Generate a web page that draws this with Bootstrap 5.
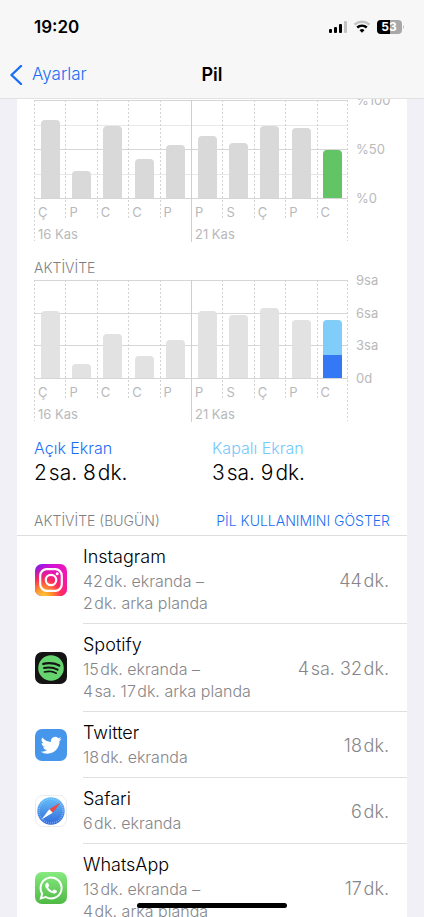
<!DOCTYPE html>
<html lang="tr">
<head>
<meta charset="utf-8">
<meta name="viewport" content="width=device-width, initial-scale=1">
<title>Pil</title>
<link href="https://cdn.jsdelivr.net/npm/bootstrap@5.3.0/dist/css/bootstrap.min.css" rel="stylesheet">
<style>
  body { font-family: Inter, "Liberation Sans", sans-serif; font-weight: 300; background: #f1f0f6; color: #000; }
  a, button { font-weight: 300; }
  .top-area { background: #f7f7f7; border-bottom: 1px solid #e2e2e3; }
  .status-line { height: 52px; padding: 3px 20px 0 34px; }
  .clock { font-size: 17px; font-weight: 600; }
  .title-line { display: grid; grid-template-columns: 1fr auto 1fr; height: 46px; padding: 0 10px; font-size: 17px; }
  .title-line h1 { font-size: 18px; font-weight: 600; }
  .ios-blue { color: #1a6df5; }
  .scroller { min-height: 0; scrollbar-width: none; }
  .scroller::-webkit-scrollbar { display: none; }
  .panel { margin: 0 17px; background: #fff; padding-top: 1px; }
  .inset { padding-left: 17px; padding-right: 17px; }
  .chart { padding: 0 59px 0 17px; display: grid; grid-template-columns: 1fr 0; color: #b9b9bb; font-size: 13px; font-weight: 400; }
  .plot { display: grid; }
  .plot > * { grid-area: 1 / 1; }
  .rules, .scale { height: 99px; }
  .rules i { height: 1px; background: #d6d6d6; }
  .rules i.faint { background: #e8e8e8; }
  .scale span { height: 1px; line-height: 1px; white-space: nowrap; padding-left: 8px; }
  .days { display: grid; grid-template-columns: repeat(10, minmax(0, 1fr)); height: 142px; }
  .day, .days-end { background: repeating-linear-gradient(to bottom, #d2d2d4 0 2px, transparent 2px 4px) left top / 1px 100% no-repeat; }
  .day { height: 118px; }
  .day.first { height: 141px; }
  .day.week { height: 142px; background: linear-gradient(#cfcfd1, #cfcfd1) left top / 1px 100% no-repeat; }
  .days-end { width: 1px; height: 141px; justify-self: end; }
  .bar-box { height: 98px; padding-left: 1px; }
  .bar { width: 19px; border-radius: 4px 4px 0 0; background: #d9d9d9; overflow: hidden; }
  .pale .bar { background: #e2e2e2; }
  .bar.green { background: #63c466; }
  .pale .bar.split { background: #80cdfa; }
  .split div { background: #3478f6; }
  .day-name { display: block; line-height: 20px; padding: 4px 0 0 4px; }
  .day-date { display: block; line-height: 20px; padding: 2px 0 0 4px; white-space: nowrap; }
  .caption { font-size: 14px; line-height: 20px; color: #7f7f83; }
  .chart-caption { padding-top: 16px; padding-bottom: 2px; }
  .totals { font-size: 16px; line-height: 22px; padding-top: 15px; }
  .totals strong { font-size: 21px; line-height: 28px; font-weight: 300; display: block; }
  .sky { color: #75c8fa; }
  .apps { border-top: 1px solid #dededf; }
  .app-text { padding: 10px 18px 9px 0; border-bottom: 1px solid #dfdfe0; }
  .app-row { padding-left: 18px; gap: 16px; }
  .app-row svg { width: 32px; height: 32px; }
  .app-name { font-size: 18px; line-height: 22px; font-weight: 300; margin-bottom: 2px; }
  .app-note { font-size: 16px; line-height: 22px; color: #86868a; }
  .app-time { font-size: 18px; color: #86868a; white-space: nowrap; }
  .home-bar { width: 150px; height: 5px; bottom: 9px; background: #000; }
</style>
<script src="https://cdn.jsdelivr.net/npm/bootstrap@5.3.0/dist/js/bootstrap.bundle.min.js"></script>
</head>
<body class="vh-100 d-flex flex-column overflow-hidden">

<header class="top-area flex-shrink-0">
  <div class="status-line d-flex align-items-center justify-content-between">
    <span class="clock">19:20</span>
    <svg width="76" height="15" viewBox="0 0 76 15" role="img" aria-label="Sinyal, Wi-Fi, pil yüzde 53">
      <rect x="1" y="9" width="3" height="4" rx="1"/><rect x="6" y="7" width="3" height="6" rx="1"/>
      <rect x="11" y="4" width="3" height="9" rx="1"/><rect x="16" y="1" width="3" height="12" rx="1" fill="#c3c3c3"/>
      <path d="M26.500 4.600a11.500 11.500 0 0 1 15 0" fill="none" stroke="#c3c3c3" stroke-width="2.500"/>
      <path d="M29.200 7.500a7.300 7.300 0 0 1 9.600 0" fill="none" stroke="#000" stroke-width="2.500"/>
      <path d="M34 12.800l-2.500-2.500a3.600 3.600 0 0 1 5 0z"/>
      <rect x="49" y="0" width="25" height="14" rx="4" fill="#a8a8a8"/>
      <path d="M53 0h9v14h-9a4 4 0 0 1-4-4V4a4 4 0 0 1 4-4z"/>
      <path d="M75 5q1.500 2 0 4z" fill="#a8a8a8"/>
      <text x="61" y="11" text-anchor="middle" font-size="12" font-weight="700" fill="#fff">53</text>
    </svg>
  </div>
  <nav class="title-line align-items-center">
    <a href="#" class="ios-blue text-decoration-none d-flex align-items-center gap-2">
      <svg width="14" height="20" viewBox="0 0 14 20" fill="none" stroke="currentColor" stroke-width="2.400" stroke-linecap="round" stroke-linejoin="round" aria-hidden="true"><path d="M11 1L1.500 10l9.500 9"/></svg>
      Ayarlar
    </a>
    <h1 class="m-0">Pil</h1>
  </nav>
</header>

<main class="scroller flex-fill overflow-auto">
  <div class="panel">
    <section class="chart" aria-label="Pil düzeyi">
      <div class="plot">
        <div class="rules d-flex flex-column justify-content-between"><i></i><i class="faint"></i><i></i><i class="faint"></i><i></i></div>
        <div class="days">
          <div class="day first"><div class="bar-box d-flex align-items-end justify-content-center"><div class="bar" style="height:80%"></div></div><span class="day-name">Ç</span><span class="day-date">16 Kas</span></div>
          <div class="day"><div class="bar-box d-flex align-items-end justify-content-center"><div class="bar" style="height:28%"></div></div><span class="day-name">P</span></div>
          <div class="day"><div class="bar-box d-flex align-items-end justify-content-center"><div class="bar" style="height:73%"></div></div><span class="day-name">C</span></div>
          <div class="day"><div class="bar-box d-flex align-items-end justify-content-center"><div class="bar" style="height:40%"></div></div><span class="day-name">C</span></div>
          <div class="day"><div class="bar-box d-flex align-items-end justify-content-center"><div class="bar" style="height:54%"></div></div><span class="day-name">P</span></div>
          <div class="day week"><div class="bar-box d-flex align-items-end justify-content-center"><div class="bar" style="height:63%"></div></div><span class="day-name">P</span><span class="day-date">21 Kas</span></div>
          <div class="day"><div class="bar-box d-flex align-items-end justify-content-center"><div class="bar" style="height:56%"></div></div><span class="day-name">S</span></div>
          <div class="day"><div class="bar-box d-flex align-items-end justify-content-center"><div class="bar" style="height:73%"></div></div><span class="day-name">Ç</span></div>
          <div class="day"><div class="bar-box d-flex align-items-end justify-content-center"><div class="bar" style="height:71%"></div></div><span class="day-name">P</span></div>
          <div class="day"><div class="bar-box d-flex align-items-end justify-content-center"><div class="bar green" style="height:49%"></div></div><span class="day-name">C</span></div>
        </div>
        <div class="days-end"></div>
      </div>
      <div class="scale d-flex flex-column justify-content-between"><span>%100</span><span>%50</span><span>%0</span></div>
    </section>

    <h2 class="caption chart-caption inset fw-light m-0">AKTİVİTE</h2>
    <section class="chart pale" aria-label="Aktivite">
      <div class="plot">
        <div class="rules d-flex flex-column justify-content-between"><i></i><i></i><i></i><i></i></div>
        <div class="days">
          <div class="day first"><div class="bar-box d-flex align-items-end justify-content-center"><div class="bar" style="height:68%"></div></div><span class="day-name">Ç</span><span class="day-date">16 Kas</span></div>
          <div class="day"><div class="bar-box d-flex align-items-end justify-content-center"><div class="bar" style="height:14%"></div></div><span class="day-name">P</span></div>
          <div class="day"><div class="bar-box d-flex align-items-end justify-content-center"><div class="bar" style="height:45%"></div></div><span class="day-name">C</span></div>
          <div class="day"><div class="bar-box d-flex align-items-end justify-content-center"><div class="bar" style="height:22%"></div></div><span class="day-name">C</span></div>
          <div class="day"><div class="bar-box d-flex align-items-end justify-content-center"><div class="bar" style="height:39%"></div></div><span class="day-name">P</span></div>
          <div class="day week"><div class="bar-box d-flex align-items-end justify-content-center"><div class="bar" style="height:68%"></div></div><span class="day-name">P</span><span class="day-date">21 Kas</span></div>
          <div class="day"><div class="bar-box d-flex align-items-end justify-content-center"><div class="bar" style="height:64%"></div></div><span class="day-name">S</span></div>
          <div class="day"><div class="bar-box d-flex align-items-end justify-content-center"><div class="bar" style="height:71%"></div></div><span class="day-name">Ç</span></div>
          <div class="day"><div class="bar-box d-flex align-items-end justify-content-center"><div class="bar" style="height:59%"></div></div><span class="day-name">P</span></div>
          <div class="day"><div class="bar-box d-flex align-items-end justify-content-center"><div class="bar split d-flex align-items-end" style="height:59%"><div class="w-100" style="height:40%"></div></div></div><span class="day-name">C</span></div>
        </div>
        <div class="days-end"></div>
      </div>
      <div class="scale d-flex flex-column justify-content-between"><span>9sa</span><span>6sa</span><span>3sa</span><span>0d</span></div>
    </section>

    <div class="totals inset row g-0">
      <div class="col-6"><span class="ios-blue">Açık Ekran</span><strong>2&#8202;sa. 8&#8202;dk.</strong></div>
      <div class="col-6"><span class="sky">Kapalı Ekran</span><strong>3&#8202;sa. 9&#8202;dk.</strong></div>
    </div>

    <div class="caption inset d-flex justify-content-between pt-4 pb-1">
      <span>AKTİVİTE (BUGÜN)</span>
      <button type="button" class="ios-blue border-0 bg-transparent p-0">PİL KULLANIMINI GÖSTER</button>
    </div>

    <ul class="apps list-unstyled m-0">
      <li class="app-row d-flex align-items-center">
        <svg viewBox="0 0 32 32" aria-hidden="true">
          <defs>
            <linearGradient id="ig-base" x1="0" y1="0" x2="1" y2="0"><stop offset="0" stop-color="#6a1df8"/><stop offset=".5" stop-color="#d010dc"/><stop offset="1" stop-color="#f218b4"/></linearGradient>
            <radialGradient id="ig-warm" cx=".25" cy="1.050" r="1.050"><stop offset="0" stop-color="#ffd23c"/><stop offset=".25" stop-color="#ff9a2a"/><stop offset=".55" stop-color="#ff2c5a"/><stop offset="1" stop-color="#ff1090" stop-opacity="0"/></radialGradient>
          </defs>
          <rect width="32" height="32" rx="7" fill="url(#ig-base)"/><rect width="32" height="32" rx="7" fill="url(#ig-warm)"/>
          <g fill="none" stroke="#fff" stroke-width="2.200"><rect x="5.200" y="5.200" width="21.600" height="21.600" rx="6.500"/><circle cx="16" cy="16" r="5.200"/></g><circle cx="22.200" cy="9.800" r="1.500" fill="#fff"/>
        </svg>
        <div class="app-text d-flex flex-fill align-items-center justify-content-between">
          <div><h3 class="app-name">Instagram</h3><div class="app-note">42&#8202;dk. ekranda –<br>2&#8202;dk. arka planda</div></div>
          <span class="app-time">44&#8202;dk.</span>
        </div>
      </li>
      <li class="app-row d-flex align-items-center">
        <svg viewBox="0 0 32 32" aria-hidden="true"><rect width="32" height="32" rx="7" fill="#151313"/><path fill="#65d46e" transform="translate(3.200 3.200) scale(1.600)" d="M8 0a8 8 0 1 0 0 16A8 8 0 0 0 8 0zm3.669 11.538a.498.498 0 0 1-.686.166c-1.879-1.148-4.243-1.408-7.028-.772a.499.499 0 0 1-.222-.973c3.048-.696 5.662-.397 7.770.892a.5.5 0 0 1 .166.687zm.979-2.178a.624.624 0 0 1-.858.205c-2.150-1.321-5.428-1.704-7.972-.932a.625.625 0 0 1-.362-1.194c2.905-.881 6.517-.454 8.986 1.063a.624.624 0 0 1 .206.858zm.084-2.268C10.154 5.560 5.900 5.419 3.438 6.166a.748.748 0 1 1-.434-1.432c2.825-.857 7.523-.692 10.492 1.070a.747.747 0 1 1-.764 1.288z"/></svg>
        <div class="app-text d-flex flex-fill align-items-center justify-content-between">
          <div><h3 class="app-name">Spotify</h3><div class="app-note">15&#8202;dk. ekranda –<br>4&#8202;sa. 17&#8202;dk. arka planda</div></div>
          <span class="app-time">4&#8202;sa. 32&#8202;dk.</span>
        </div>
      </li>
      <li class="app-row d-flex align-items-center">
        <svg viewBox="0 0 32 32" aria-hidden="true"><rect width="32" height="32" rx="7" fill="#4697ec"/><path fill="#fff" transform="translate(5.800 5.200) scale(1.300)" d="M5.026 15c6.038 0 9.341-5.003 9.341-9.334 0-.14 0-.282-.006-.422A6.685 6.685 0 0 0 16 3.542a6.658 6.658 0 0 1-1.889.518 3.301 3.301 0 0 0 1.447-1.817 6.533 6.533 0 0 1-2.087.793A3.286 3.286 0 0 0 7.875 6.030a9.325 9.325 0 0 1-6.767-3.429 3.289 3.289 0 0 0 1.018 4.382A3.323 3.323 0 0 1 .64 6.575v.045a3.288 3.288 0 0 0 2.632 3.218 3.203 3.203 0 0 1-.865.115 3.230 3.230 0 0 1-.614-.057 3.283 3.283 0 0 0 3.067 2.277A6.588 6.588 0 0 1 .78 13.580a6.320 6.320 0 0 1-.78-.045A9.344 9.344 0 0 0 5.026 15z"/></svg>
        <div class="app-text d-flex flex-fill align-items-center justify-content-between">
          <div><h3 class="app-name">Twitter</h3><div class="app-note">18&#8202;dk. ekranda</div></div>
          <span class="app-time">18&#8202;dk.</span>
        </div>
      </li>
      <li class="app-row d-flex align-items-center">
        <svg viewBox="0 0 32 32" aria-hidden="true">
          <defs><linearGradient id="saf" x1="0" y1="0" x2="0" y2="1"><stop offset="0" stop-color="#67c0f8"/><stop offset="1" stop-color="#3269dc"/></linearGradient></defs>
          <rect x=".5" y=".5" width="31" height="31" rx="7" fill="#fff" stroke="#ececee"/>
          <circle cx="16" cy="16" r="13.700" fill="url(#saf)"/><circle cx="16" cy="16" r="12" fill="none" stroke="#b9dcfa" stroke-width="1.500" stroke-dasharray=".6 1.500" opacity=".8"/>
          <path d="M25.500 7.500L14.300 14.300l3.400 3.400z" fill="#f0483e"/><path d="M6.500 24.500l7.800-10.200 3.400 3.400z" fill="#fff"/>
        </svg>
        <div class="app-text d-flex flex-fill align-items-center justify-content-between">
          <div><h3 class="app-name">Safari</h3><div class="app-note">6&#8202;dk. ekranda</div></div>
          <span class="app-time">6&#8202;dk.</span>
        </div>
      </li>
      <li class="app-row d-flex align-items-center">
        <svg viewBox="0 0 32 32" aria-hidden="true"><defs><linearGradient id="wa" x1="0" y1="0" x2="0" y2="1"><stop offset="0" stop-color="#86ea80"/><stop offset="1" stop-color="#4fb944"/></linearGradient></defs><rect width="32" height="32" rx="7" fill="url(#wa)"/><path fill="#fff" transform="translate(4.500 4.500) scale(1.450)" d="M13.601 2.326A7.854 7.854 0 0 0 7.994 0C3.627 0 .068 3.558.064 7.926c0 1.399.366 2.760 1.057 3.965L0 16l4.204-1.102a7.933 7.933 0 0 0 3.790.965h.004c4.368 0 7.926-3.558 7.930-7.930A7.898 7.898 0 0 0 13.600 2.326zM7.994 14.521a6.573 6.573 0 0 1-3.356-.92l-.24-.144-2.494.654.666-2.433-.156-.251a6.560 6.560 0 0 1-1.007-3.505c0-3.626 2.957-6.584 6.591-6.584a6.560 6.560 0 0 1 4.660 1.931 6.557 6.557 0 0 1 1.928 4.660c-.004 3.639-2.961 6.592-6.592 6.592zm3.615-4.934c-.197-.099-1.170-.578-1.353-.646-.182-.065-.315-.099-.445.099-.133.197-.513.646-.627.775-.114.133-.232.148-.43.05-.197-.1-.836-.308-1.592-.985-.59-.525-.985-1.175-1.103-1.372-.114-.198-.011-.304.088-.403.087-.088.197-.232.296-.346.1-.114.133-.198.198-.33.065-.134.034-.248-.015-.347-.05-.099-.445-1.076-.612-1.470-.16-.389-.323-.335-.445-.34-.114-.007-.247-.007-.38-.007a.729.729 0 0 0-.529.247c-.182.198-.691.677-.691 1.654 0 .977.71 1.916.81 2.049.098.133 1.394 2.132 3.383 2.992.47.205.84.326 1.129.418.475.152.904.129 1.246.08.38-.058 1.171-.48 1.338-.943.164-.464.164-.86.114-.943-.049-.084-.182-.133-.38-.232z"/></svg>
        <div class="app-text d-flex flex-fill align-items-center justify-content-between">
          <div><h3 class="app-name">WhatsApp</h3><div class="app-note">13&#8202;dk. ekranda –<br>4&#8202;dk. arka planda</div></div>
          <span class="app-time">17&#8202;dk.</span>
        </div>
      </li>
    </ul>
  </div>
</main>

<div class="home-bar position-fixed start-50 translate-middle-x rounded-pill"></div>
</body>
</html>
